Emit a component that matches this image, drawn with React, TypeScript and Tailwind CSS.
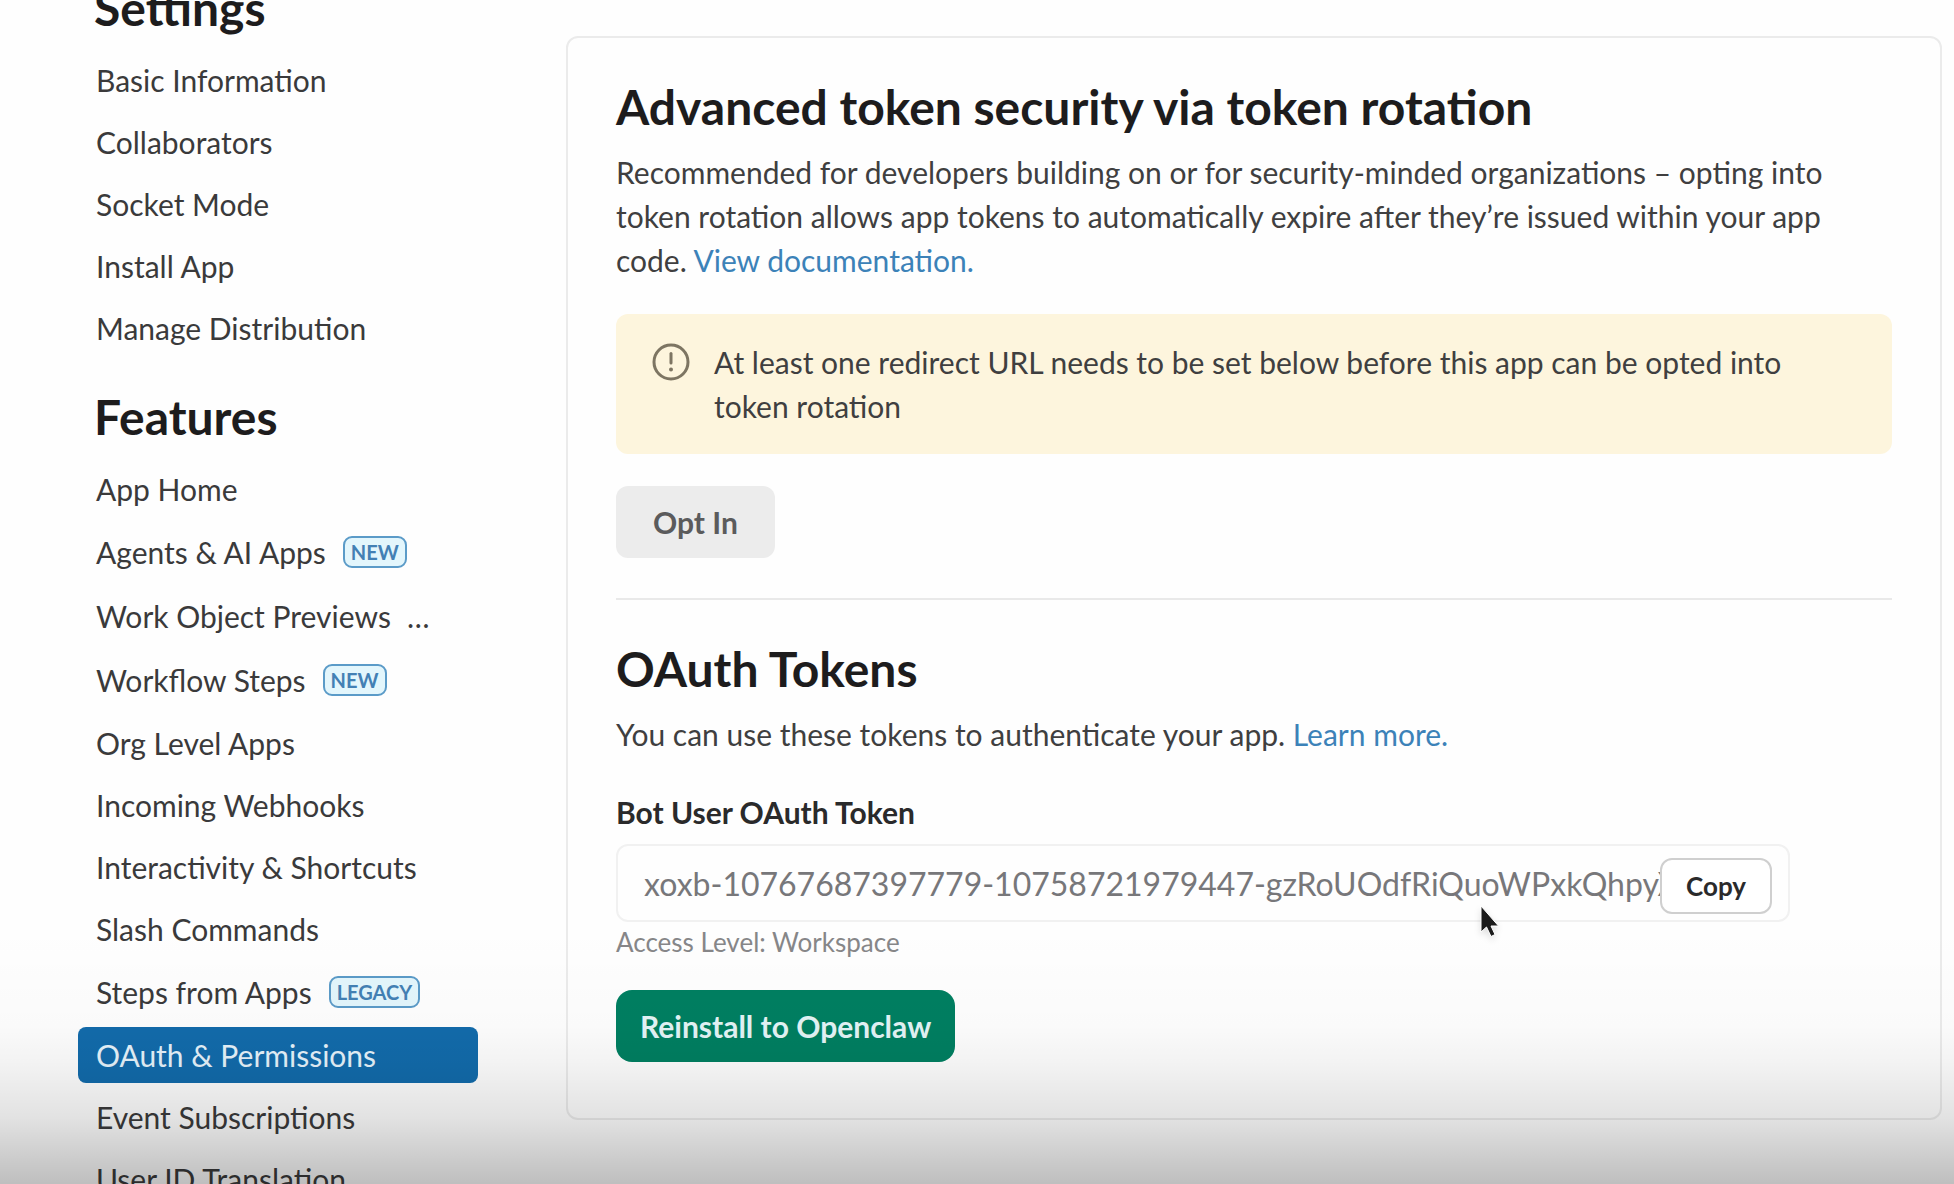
import React from 'react';

interface NavItem {
    label: string;
    tag?: string;
    truncated?: boolean;
    active?: boolean;
}

const SETTINGS_ITEMS: NavItem[] = [
    { label: 'Basic Information' },
    { label: 'Collaborators' },
    { label: 'Socket Mode' },
    { label: 'Install App' },
    { label: 'Manage Distribution' },
];

const FEATURE_ITEMS: NavItem[] = [
    { label: 'App Home' },
    { label: 'Agents & AI Apps', tag: 'NEW' },
    { label: 'Work Object Previews', truncated: true },
    { label: 'Workflow Steps', tag: 'NEW' },
    { label: 'Org Level Apps' },
    { label: 'Incoming Webhooks' },
    { label: 'Interactivity & Shortcuts' },
    { label: 'Slash Commands' },
    { label: 'Steps from Apps', tag: 'LEGACY' },
    { label: 'OAuth & Permissions', active: true },
    { label: 'Event Subscriptions' },
    { label: 'User ID Translation' },
];

const NavLink: React.FC<{ item: NavItem }> = ({ item }) => {
    const height = item.tag || item.truncated ? 'h-[58px]' : 'h-14';
    const color = item.active ? 'bg-[#126bab] text-[#e6f3fb]' : 'text-[#3a3a3b]';

    return (
        <a
            href="#"
            aria-current={item.active ? 'page' : undefined}
            className={`flex items-center rounded-lg px-[18px] text-[30px] leading-[56px] whitespace-nowrap ${height} ${color}`}
        >
            {item.label}
            {item.tag && (
                <span className="ml-[17px] rounded-[9px] border-2 border-[#5b9bc8] bg-[#e3f6fc] px-1.5 text-[20px] leading-[28px] font-bold text-[#4380b4]">
                    {item.tag}
                </span>
            )}
            {item.truncated && <span className="ml-4">…</span>}
        </a>
    );
};

const NavSection: React.FC<{ title: string; items: NavItem[] }> = ({ title, items }) => (
    <section>
        <h2 className="px-4 text-[48px] leading-[60px] font-bold text-[#1d1c1d]">{title}</h2>
        <ul className="mt-3.5 flex flex-col gap-1.5">
            {items.map(item => (
                <li key={item.label}>
                    <NavLink item={item} />
                </li>
            ))}
        </ul>
    </section>
);

const WarningIcon: React.FC = () => (
    <svg viewBox="0 0 38 38" className="h-[38px] w-[38px] shrink-0" fill="none" stroke="#7d7562" strokeWidth="3" strokeLinecap="round" aria-hidden="true">
        <circle cx="19" cy="19" r="17" />
        <path d="M19 10.5v9.5" />
        <circle cx="19" cy="26.5" r="2" fill="#7d7562" stroke="none" />
    </svg>
);

const Cursor: React.FC = () => (
    <svg viewBox="0 0 24 36" className="absolute top-[61px] left-[863px] h-9 w-6 drop-shadow-md" aria-hidden="true">
        <path d="M2 1v26l5.500-5 4.500 9.500 4-2-4-8.500h7.500z" fill="#1b1b1b" stroke="#fff" strokeWidth="1" />
    </svg>
);

const App: React.FC = () => {
    return (
        <div className="relative h-screen overflow-hidden bg-[#fefefe] font-['Lato',sans-serif]">
            <div className="flex items-start">
                <nav className="-mt-[22px] ml-[78px] flex w-[400px] shrink-0 flex-col gap-[31px]">
                    <NavSection title="Settings" items={SETTINGS_ITEMS} />
                    <NavSection title="Features" items={FEATURE_ITEMS} />
                </nav>

                <main className="mt-9 mr-3 ml-[88px] min-w-0 flex-1 rounded-xl border-2 border-[#ebebeb] px-12 pt-[39px] pb-14">
                    <section>
                        <h1 className="text-[48px] leading-[60px] font-bold text-[#1d1c1d]">Advanced token security via token rotation</h1>
                        <p className="mt-[13px] text-[30px] leading-[44px] text-[#3f3f40]">
                            Recommended for developers building on or for security-minded organizations – opting into token rotation allows app tokens to automatically expire after they’re issued within your app code.{' '}
                            <a href="#" className="text-[#3c82b8]">View documentation.</a>
                        </p>

                        <div className="mt-8 flex gap-6 rounded-xl bg-[#fdf5dd] px-9 py-[26px]">
                            <div className="pt-[3px]"><WarningIcon /></div>
                            <p className="text-[30px] leading-[44px] text-[#3f3f40]">
                                At least one redirect URL needs to be set below before this app can be opted into token rotation
                            </p>
                        </div>

                        <button type="button" className="mt-8 h-[72px] rounded-xl bg-[#ececec] px-[37px] text-[30px] font-bold text-[#5b5b5c]">
                            Opt In
                        </button>
                    </section>

                    <section className="mt-10 border-t-2 border-[#e9e9e9] pt-[39px]">
                        <h2 className="text-[48px] leading-[60px] font-bold text-[#1d1c1d]">OAuth Tokens</h2>
                        <p className="mt-[13px] text-[30px] leading-[44px] text-[#3f3f40]">
                            You can use these tokens to authenticate your app. <a href="#" className="text-[#3c82b8]">Learn more.</a>
                        </p>

                        <label htmlFor="bot-token" className="mt-[34px] block text-[30px] leading-[44px] font-bold text-[#2a2a2b]">
                            Bot User OAuth Token
                        </label>
                        <div className="relative mt-2.5 mr-[102px]">
                            <input
                                id="bot-token"
                                type="text"
                                readOnly
                                value="xoxb-10767687397779-10758721979447-gzRoUOdfRiQuoWPxkQhpyX"
                                className="h-[78px] w-full rounded-xl border-2 border-[#f1f1f1] bg-transparent px-[26px] text-[32px] text-[#77777a] outline-none"
                            />
                            <button type="button" className="absolute top-3.5 right-[18px] h-14 rounded-xl border-2 border-[#cfcfcf] bg-white px-6 text-[26px] font-bold text-[#2a2a2b]">
                                Copy
                            </button>
                            <Cursor />
                        </div>
                        <p className="text-[26px] leading-[40px] text-[#868688]">Access Level: Workspace</p>

                        <button type="button" className="mt-7 h-[72px] rounded-2xl bg-[#007f61] px-6 text-[30px] font-bold text-[#e3f4f6]">
                            Reinstall to Openclaw
                        </button>
                    </section>
                </main>
            </div>

            {/* Shade along the bottom edge */}
            <div className="pointer-events-none absolute inset-x-0 bottom-0 h-64 bg-[linear-gradient(to_bottom,rgb(0_0_0/0)_0%,rgb(0_0_0/0.015)_38%,rgb(0_0_0/0.045)_52%,rgb(0_0_0/0.11)_74%,rgb(0_0_0/0.18)_87%,rgb(0_0_0/0.25)_100%)]" />
        </div>
    );
};

export default App;
